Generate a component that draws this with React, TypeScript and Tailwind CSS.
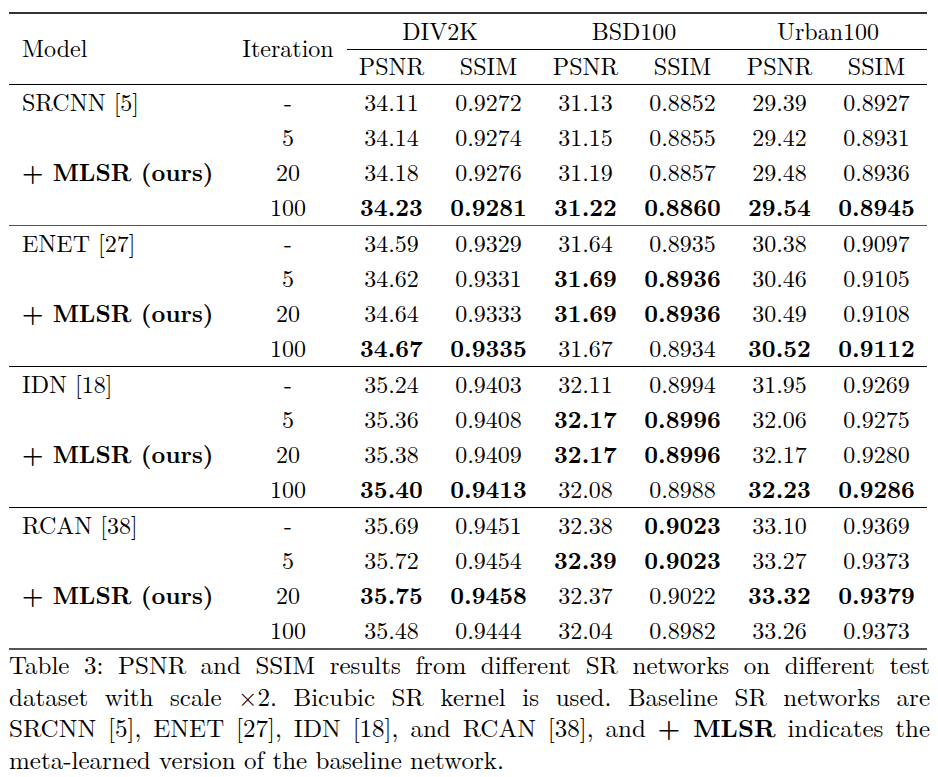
import React from "react";

type Group = { name: string; rows: [string, string[]][] };

const groups: Group[] = [
  {
    name: "SRCNN [5]",
    rows: [
      ["-", ["34.11", "0.9272", "31.13", "0.8852", "29.39", "0.8927"]],
      ["5", ["34.14", "0.9274", "31.15", "0.8855", "29.42", "0.8931"]],
      ["20", ["34.18", "0.9276", "31.19", "0.8857", "29.48", "0.8936"]],
      ["100", ["*34.23", "*0.9281", "*31.22", "*0.8860", "*29.54", "*0.8945"]],
    ],
  },
  {
    name: "ENET [27]",
    rows: [
      ["-", ["34.59", "0.9329", "31.64", "0.8935", "30.38", "0.9097"]],
      ["5", ["34.62", "0.9331", "*31.69", "*0.8936", "30.46", "0.9105"]],
      ["20", ["34.64", "0.9333", "*31.69", "*0.8936", "30.49", "0.9108"]],
      ["100", ["*34.67", "*0.9335", "31.67", "0.8934", "*30.52", "*0.9112"]],
    ],
  },
  {
    name: "IDN [18]",
    rows: [
      ["-", ["35.24", "0.9403", "32.11", "0.8994", "31.95", "0.9269"]],
      ["5", ["35.36", "0.9408", "*32.17", "*0.8996", "32.06", "0.9275"]],
      ["20", ["35.38", "0.9409", "*32.17", "*0.8996", "32.17", "0.9280"]],
      ["100", ["*35.40", "*0.9413", "32.08", "0.8988", "*32.23", "*0.9286"]],
    ],
  },
  {
    name: "RCAN [38]",
    rows: [
      ["-", ["35.69", "0.9451", "32.38", "*0.9023", "33.10", "0.9369"]],
      ["5", ["35.72", "0.9454", "*32.39", "*0.9023", "33.27", "0.9373"]],
      ["20", ["*35.75", "*0.9458", "32.37", "0.9022", "*33.32", "*0.9379"]],
      ["100", ["35.48", "0.9444", "32.04", "0.8982", "33.26", "0.9373"]],
    ],
  },
];

function Cell({ v }: { v: string }) {
  const bold = v.startsWith("*");
  const t = bold ? v.slice(1) : v;
  return (
    <div className="w-[97px] flex items-center justify-center">
      {bold ? <span className="font-bold">{t}</span> : <span>{t}</span>}
    </div>
  );
}

function Row({ label, iter, vals }: { label: React.ReactNode; iter: string; vals: string[] }) {
  return (
    <div className="flex h-[35px] pb-[4px] items-center">
      <div className="w-[232px] pl-[13px] flex items-center">{label}</div>
      <div className="w-[94px] text-center">{iter}</div>
      <div className="w-[8px]" />
      {vals.map((v, i) => (
        <Cell key={i} v={v} />
      ))}
    </div>
  );
}

export default function App() {
  return (
    <div className="w-[938px] h-[777px] bg-white text-black font-['Latin_Modern_Roman'] text-[24px] leading-none overflow-hidden">
      <div className="ml-[9px] w-[918px] pt-[12px]">
        <div className="h-[2px] bg-[#333]" />
        <div className="flex h-[70px]">
          <div className="w-[232px] pl-[13px] pb-[5px] flex items-center">Model</div>
          <div className="w-[94px] pb-[5px] flex items-center justify-center">Iteration</div>
          <div className="w-[8px]" />
          <div className="flex flex-col w-[584px]">
            <div className="flex h-[35px] pb-[4px] items-center">
              <div className="w-[194px] text-center">DIV2K</div>
              <div className="w-[194px] text-center">BSD100</div>
              <div className="w-[194px] text-center">Urban100</div>
            </div>
            <div className="h-px bg-black ml-[4px]" />
            <div className="flex h-[34px] pb-[4px] items-center">
              {["PSNR", "SSIM", "PSNR", "SSIM", "PSNR", "SSIM"].map((h, i) => (
                <div key={i} className="w-[97px] text-center">{h}</div>
              ))}
            </div>
          </div>
        </div>
        <div className="h-px bg-black" />
        {groups.map((g, gi) => (
          <div key={gi}>
            {g.rows.map(([iter, vals], ri) => (
              <Row
                key={ri}
                iter={iter}
                vals={vals}
                label={
                  ri === 0 ? (
                    <span>{g.name}</span>
                  ) : ri === 2 ? (
                    <span className="font-bold whitespace-pre">+ MLSR (ours)</span>
                  ) : null
                }
              />
            ))}
            {gi < groups.length - 1 ? (
              <div className={gi === 0 ? "h-px bg-[#555]" : "h-px bg-black"} />
            ) : (
              <div className="h-[2px] bg-[#555]" />
            )}
          </div>
        ))}
        <div className="w-[921px] text-[25px] leading-[31.7px] -mt-[2px]">
          <div className="text-justify [text-align-last:justify]">
            Table 3: PSNR and SSIM results from different SR networks on different test
          </div>
          <div className="text-justify [text-align-last:justify]">
            dataset with scale ×2. Bicubic SR kernel is used. Baseline SR networks are
          </div>
          <div className="text-justify [text-align-last:justify]">
            SRCNN [5], ENET [27], IDN [18], and RCAN [38], and{" "}
            <span className="font-bold">+ MLSR</span> indicates the
          </div>
          <div>meta-learned version of the baseline network.</div>
        </div>
      </div>
    </div>
  );
}
